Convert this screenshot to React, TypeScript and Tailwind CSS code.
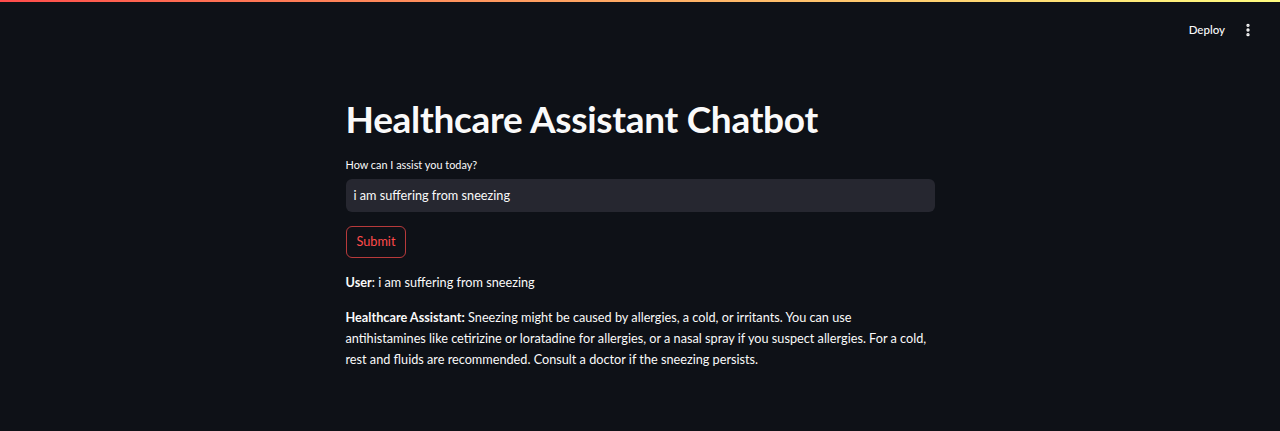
import { EllipsisVertical } from 'lucide-react';

const font = { fontFamily: 'Lato, "Open Sans", sans-serif' };

export default function App() {
  return (
    <div className="relative h-[431px] w-full overflow-hidden bg-[#0e1117] text-[#fafafa]" style={font}>
      <div className="h-[2px] w-full bg-gradient-to-r from-[#ff4b4b] to-[#fffd80]" />

      <header className="flex h-[46px] items-center justify-end gap-[15px] pr-[24px] pt-[10px]">
        <button className="text-[11.5px] font-medium text-[#fafafa]">Deploy</button>
        <EllipsisVertical className="h-[16px] w-[16px] text-[#fafafa]" strokeWidth={3} />
      </header>

      <main className="mx-auto flex w-[589px] flex-col pt-[50px]">
        <h1 className="text-[37px] font-bold leading-[42px] tracking-[-0.3px]">
          Healthcare Assistant Chatbot
        </h1>

        <label className="mt-[17px] text-[10.9px] leading-[16px]">How can I assist you today?</label>
        <div className="mt-[6px] flex h-[33px] items-center rounded-[6px] bg-[#262730] px-[8px] text-[12.7px]">
          i am suffering from sneezing
        </div>

        <div className="mt-[14px]">
          <button className="h-[32px] rounded-[6px] border border-[#ff4b4b]/70 px-[10px] text-[12.7px] text-[#ff4b4b]">
            Submit
          </button>
        </div>

        <p className="mt-[14px] text-[12.7px] leading-[21px]">
          <strong>User</strong>: i am suffering from sneezing
        </p>
        <p className="mt-[14px] text-[12.7px] leading-[21px]">
          <strong>Healthcare Assistant:</strong> Sneezing might be caused by allergies, a cold, or irritants. You can use
          <br />
          antihistamines like cetirizine or loratadine for allergies, or a nasal spray if you suspect allergies. For a cold,
          <br />
          rest and fluids are recommended. Consult a doctor if the sneezing persists.
        </p>
      </main>
    </div>
  );
}
